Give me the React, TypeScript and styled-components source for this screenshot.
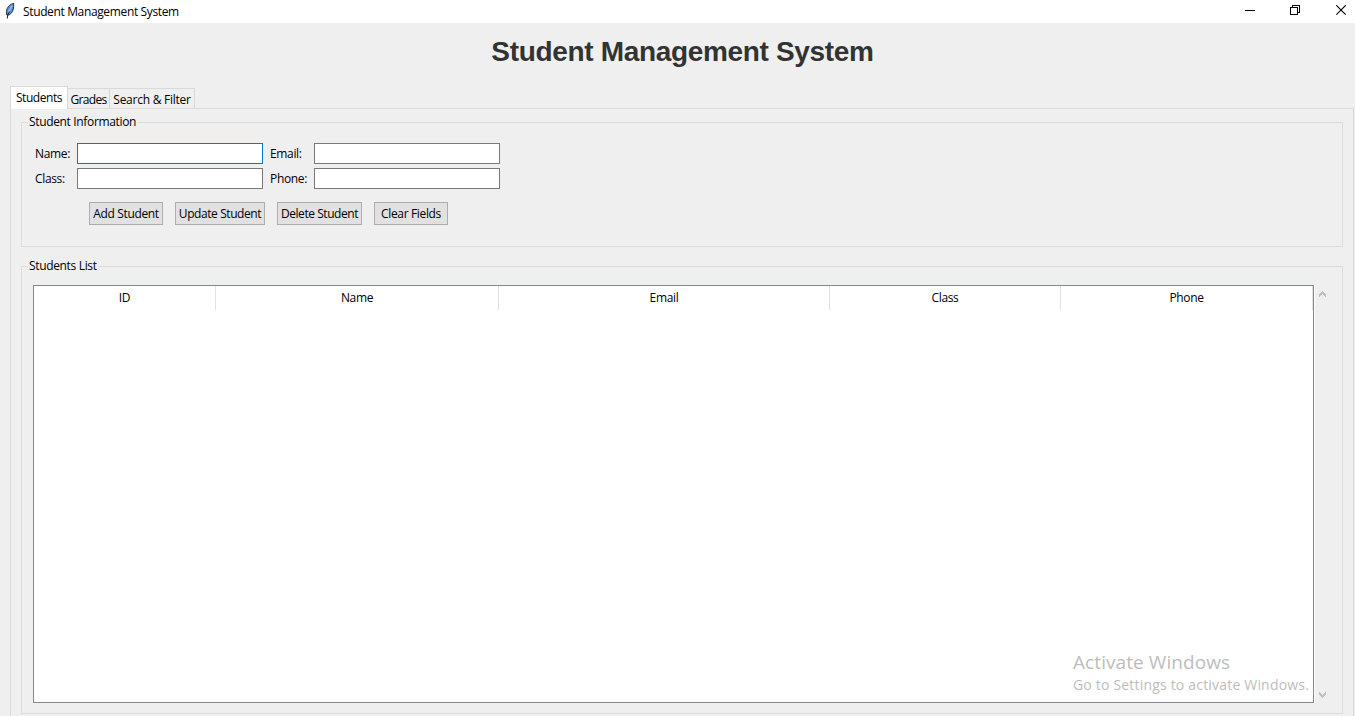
import React from "react";
import styled, { createGlobalStyle } from "styled-components";

const GlobalStyle = createGlobalStyle`
  * { box-sizing: border-box; }
  html, body { margin: 0; padding: 0; overflow: hidden; }
  body {
    background: #efefef;
    color: #000;
    font-family: "Open Sans", "Noto Sans", sans-serif;
    font-size: 12px;
    line-height: 16px;
  }
`;

const Window = styled.div`
  position: relative;
  display: flex;
  flex-direction: column;
  width: 1355px;
  height: 716px;
  overflow: hidden;
  background: #efefef;
`;

const TitleBar = styled.header`
  display: flex;
  flex: none;
  align-items: flex-start;
  height: 23px;
  padding-left: 4px;
  background: #fff;
`;

const AppIcon = styled.svg`
  width: 12px;
  height: 18px;
  margin-top: 2px;
  margin-right: 7px;
`;

const Text = styled.span<{ $ls?: number }>`
  white-space: nowrap;
  letter-spacing: ${(p) => p.$ls ?? -0.34}px;
`;

const WindowTitle = styled(Text)`
  margin-top: 4px;
`;

const WindowButtons = styled.div`
  display: flex;
  gap: 35px;
  margin-left: auto;
  padding: 5px 8px 0 0;
`;

const Glyph = styled.svg`
  display: block;
  width: 11px;
  height: 11px;
`;

const Heading = styled.h1`
  flex: none;
  height: 63px;
  margin: 0;
  padding: 13px 0 0 10px;
  color: #333;
  font: bold 28px/32px "Liberation Sans", Arial, sans-serif;
  letter-spacing: -0.33px;
  text-align: center;
  white-space: nowrap;
`;

const Tabs = styled.nav`
  display: flex;
  flex: none;
  align-items: flex-end;
  height: 22px;
  padding-left: 10px;
`;

const Tab = styled.div<{ $active?: boolean; $w: number }>`
  z-index: ${(p) => (p.$active ? 1 : 0)};
  width: ${(p) => p.$w}px;
  height: ${(p) => (p.$active ? 23 : 20)}px;
  margin-bottom: ${(p) => (p.$active ? -1 : 0)}px;
  padding-top: 3px;
  border: 1px solid #d9d9d9;
  border-bottom: 0;
  border-left-width: ${(p) => (p.$active ? 1 : 0)}px;
  background: ${(p) => (p.$active ? "#fff" : "#efefef")};
  text-align: center;
`;

const Pane = styled.main`
  display: flex;
  flex: none;
  flex-direction: column;
  gap: 11px;
  width: 1344px;
  height: 640px;
  margin-left: 10px;
  padding: 5px 10px;
  border: 1px solid #d9d9d9;
`;

const Group = styled.fieldset<{ $h: number }>`
  display: flex;
  flex: none;
  flex-direction: column;
  min-width: 0;
  width: 1322px;
  height: ${(p) => p.$h}px;
  margin: 0;
  padding: 0 11px;
  border: 1px solid #dcdcdc;
`;

const Legend = styled.legend`
  height: 16px;
  margin-left: -5px;
  padding: 0 1px;
`;

const Fields = styled.div`
  display: grid;
  grid-template-columns: 42px 186px 51px 186px;
  grid-template-rows: 21px 21px;
  row-gap: 4px;
  margin: 13px 0 0 2px;

  & > span:nth-child(4n + 3) { padding-left: 7px; }
`;

const FieldLabel = styled(Text)`
  padding-top: 3px;
`;

const Input = styled.input<{ $focused?: boolean }>`
  width: 186px;
  height: 21px;
  padding: 0 3px;
  border: 1px solid ${(p) => (p.$focused ? "#0078d7" : "#7a7a7a")};
  border-radius: 0;
  outline: 0;
  background: #fff;
  font: inherit;
`;

const Buttons = styled.div`
  display: flex;
  gap: 12px;
  margin: 13px 0 0 56px;
`;

const Button = styled.button<{ $w: number }>`
  width: ${(p) => p.$w}px;
  height: 23px;
  padding: 0;
  border: 1px solid #adadad;
  border-radius: 0;
  background: #e1e1e1;
  color: #000;
  font: inherit;
  white-space: nowrap;
`;

const ListArea = styled.div`
  display: flex;
  margin-top: 11px;
`;

const Table = styled.div`
  width: 1281px;
  height: 418px;
  border: 1px solid #828790;
  background: #fff;
`;

const HeaderRow = styled.div`
  display: grid;
  grid-template-columns: 182px 283px 331px 231px 252px;
  height: 24px;
`;

const HeaderCell = styled.div`
  padding-top: 4px;
  border-right: 1px solid #e2e2e2;
  text-align: center;
`;

const ScrollBar = styled.div`
  display: flex;
  flex-direction: column;
  justify-content: space-between;
  width: 17px;
  height: 418px;
  padding: 6px 0 5px 4px;
  border-left: 1px solid #fff;
`;

const Arrow = styled.svg<{ $down?: boolean }>`
  width: 7px;
  height: 6px;
  transform: ${(p) => (p.$down ? "scaleY(-1)" : "none")};
`;

const Watermark = styled.aside`
  position: absolute;
  left: 1073px;
  top: 650px;
  color: #bdbdbd;
  white-space: nowrap;
`;

const WatermarkTitle = styled.div`
  font-size: 19px;
  line-height: 24px;
  letter-spacing: 0.08px;
`;

const WatermarkText = styled.div`
  margin-top: 2px;
  font-size: 14px;
  line-height: 18px;
  letter-spacing: 0.19px;
`;

const columns = ["ID", "Name", "Email", "Class", "Phone"];

const ScrollArrow = ({ down }: { down?: boolean }) => (
  <Arrow $down={down} viewBox="0 0 7 6" shapeRendering="crispEdges">
    <path d="M3 0h1v1h1v1h1v1h1v3H6V5H5V4H4V3H3v1H2v1H1v1H0V3h1V2h1V1h1z" fill="#bfbfbf" />
  </Arrow>
);

export default function App() {
  return (
    <>
      <GlobalStyle />
      <Window>
        <TitleBar>
          <AppIcon viewBox="0 0 12 18">
            <path d="M9.700 1.300C7 2 4.300 4 3.200 6.500c-.8 1.900-1 4.500-.4 6.500l1.200.3c2.500-.9 4.300-2.800 5-5.300.6-2 .9-4.700.7-6.700z" fill="#5b93e0" stroke="#17202b" strokeWidth="0.9" />
            <path d="M8.200 3.500 4.300 10.500" stroke="#9cc4fa" strokeWidth="1.200" />
            <path d="M5.500 9.500 3.800 12.500 3.300 16.500" fill="none" stroke="#17202b" strokeWidth="1" />
          </AppIcon>
          <WindowTitle $ls={-0.36}>Student Management System</WindowTitle>
          <WindowButtons>
            <Glyph viewBox="0 0 11 11" shapeRendering="crispEdges">
              <path d="M1 5.500h10" stroke="#000" />
            </Glyph>
            <Glyph viewBox="0 0 11 11" shapeRendering="crispEdges">
              <path d="M.5 2.500h7v7h-7zM2.500 2V.5h7v7H8" fill="none" stroke="#000" />
            </Glyph>
            <Glyph viewBox="0 0 11 11">
              <path d="M.3.3l9.400 9.400M9.700.3L.3 9.700" stroke="#000" strokeWidth="1.100" />
            </Glyph>
          </WindowButtons>
        </TitleBar>
        <Heading>Student Management System</Heading>
        <Tabs>
          <Tab $active $w={58}><Text $ls={-0.45}>Students</Text></Tab>
          <Tab $w={42}><Text $ls={-0.7}>Grades</Text></Tab>
          <Tab $w={85}><Text $ls={-0.25}>Search &amp; Filter</Text></Tab>
        </Tabs>
        <Pane>
          <Group $h={133}>
            <Legend><Text>Student Information</Text></Legend>
            <Fields>
              <FieldLabel>Name:</FieldLabel>
              <Input $focused />
              <FieldLabel>Email:</FieldLabel>
              <Input />
              <FieldLabel>Class:</FieldLabel>
              <Input />
              <FieldLabel>Phone:</FieldLabel>
              <Input />
            </Fields>
            <Buttons>
              <Button $w={74}><Text>Add Student</Text></Button>
              <Button $w={90}><Text $ls={-0.42}>Update Student</Text></Button>
              <Button $w={85}><Text $ls={-0.44}>Delete Student</Text></Button>
              <Button $w={74}><Text>Clear Fields</Text></Button>
            </Buttons>
          </Group>
          <Group $h={456}>
            <Legend><Text>Students List</Text></Legend>
            <ListArea>
              <Table>
                <HeaderRow>
                  {columns.map((c) => (
                    <HeaderCell key={c}><Text>{c}</Text></HeaderCell>
                  ))}
                </HeaderRow>
              </Table>
              <ScrollBar>
                <ScrollArrow />
                <ScrollArrow down />
              </ScrollBar>
            </ListArea>
          </Group>
        </Pane>
        <Watermark>
          <WatermarkTitle>Activate Windows</WatermarkTitle>
          <WatermarkText>Go to Settings to activate Windows.</WatermarkText>
        </Watermark>
      </Window>
    </>
  );
}
